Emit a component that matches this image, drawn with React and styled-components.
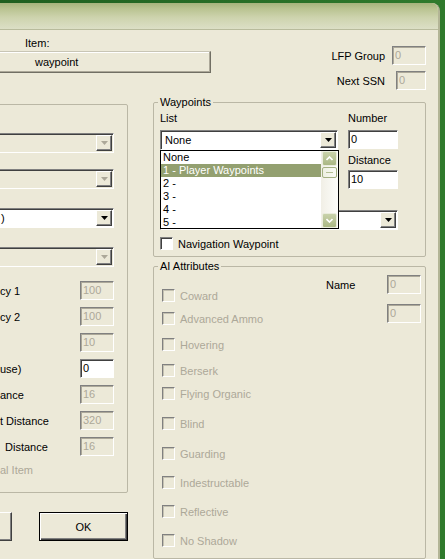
import React from "react";
import styled, { createGlobalStyle } from "styled-components";

const GlobalStyle = createGlobalStyle`
  html, body {
    margin: 0;
    padding: 0;
  }
  body {
    background: linear-gradient(90deg, #1f5f1f, #2f7a2c);
    font-family: "Liberation Sans", Arial, sans-serif;
    font-size: 11px;
    color: #000;
    overflow: hidden;
  }
`;

const Window = styled.div`
  margin: 3px 5px 0 0;
  height: 556px;
  background: #ece9d8;
  border-top-right-radius: 8px;
  border-right: 2px solid #b3b596;
  overflow: hidden;
  display: flex;
  flex-direction: column;
`;

const TitleBar = styled.div`
  height: 26px;
  flex: none;
  border-bottom: 1px solid #b8bb9c;
  background: linear-gradient(180deg, #a6b37c 0%, #b9c391 22%, #cdd3ad 55%, #dcdfc6 100%);
`;

const Body = styled.div`
  padding-right: 12px;
  display: flex;
  flex-direction: column;
`;

const Header = styled.div`
  display: flex;
  justify-content: space-between;
  height: 62px;
`;

const ItemBlock = styled.div`
  margin-left: -10px;
  width: 221px;
`;

const ItemLabel = styled.div`
  padding-left: 35px;
  margin-top: 7px;
  line-height: 13px;
`;

const ItemBox = styled.div`
  margin-top: 1px;
  height: 22px;
  box-sizing: border-box;
  padding-left: 44px;
  line-height: 20px;
  border: 1px solid;
  border-color: #c8c5b5 #716f64 #716f64 #c8c5b5;
  box-shadow: inset -1px -1px 0 #aca899, inset 1px 1px 0 #fff;
`;

const HeaderRight = styled.div`
  padding-top: 16px;
  display: flex;
  flex-direction: column;
  align-items: flex-end;
  gap: 6px;
`;

const HeaderRow = styled.div`
  display: flex;
  align-items: center;
  gap: ${(p) => p.$gap}px;
`;

const Input = styled.div`
  width: ${(p) => p.$w || 34}px;
  height: 19px;
  margin-top: ${(p) => p.$mt || 0}px;
  box-sizing: border-box;
  flex: none;
  padding-left: 2px;
  line-height: 17px;
  border: 1px solid;
  border-color: #808080 #fff #fff #808080;
  box-shadow: inset 1px 1px 0 ${(p) => (p.$disabled ? "#aca899" : "#404040")};
  background: ${(p) => (p.$disabled ? "#ece9d8" : "#fff")};
  color: ${(p) => (p.$disabled ? "#aca899" : "#000")};
`;

const Columns = styled.div`
  display: flex;
  gap: 25px;
  margin-top: 12px;
`;

const LeftCol = styled.div`
  margin-left: -10px;
  width: 138px;
  flex: none;
  display: flex;
  flex-direction: column;
`;

const RightCol = styled.div`
  width: 273px;
  flex: none;
  margin-top: -8px;
  display: flex;
  flex-direction: column;
  gap: 3px;
`;

const Group = styled.fieldset`
  margin: 0;
  min-width: 0;
  box-sizing: border-box;
  padding: ${(p) => p.$pad};
  border: 1px solid #bab7a5;
  border-radius: 2px;
  display: flex;
  flex-direction: column;
`;

const Legend = styled.legend`
  padding: 0 2px;
  margin-left: -2px;
  line-height: 13px;
`;

const ComboBox = styled.div`
  display: flex;
  height: 20px;
  box-sizing: border-box;
  flex: none;
  margin-top: ${(p) => p.$mt || 0}px;
  margin-left: ${(p) => p.$bleed || 0}px;
  padding: 1px;
  border: 1px solid;
  border-color: #808080 #fff #fff #808080;
  box-shadow: inset 1px 1px 0 #404040;
  background: ${(p) => (p.$disabled ? "#ece9d8" : "#fff")};
`;

const ComboValue = styled.div`
  flex: 1;
  min-width: 0;
  overflow: hidden;
  white-space: nowrap;
  line-height: 16px;
  padding-left: ${(p) => p.$pad ?? 3}px;
`;

const ArrowButton = styled.div`
  width: 16px;
  height: 16px;
  flex: none;
  box-sizing: border-box;
  display: flex;
  align-items: center;
  justify-content: center;
  background: #ece9d8;
  border: 1px solid;
  border-color: #fff #404040 #404040 #fff;
  box-shadow: inset -1px -1px 0 #808080;
`;

const Combo = ({ value, disabled, mt, bleed, pad }) => (
  <ComboBox $disabled={disabled} $mt={mt} $bleed={bleed}>
    <ComboValue $pad={pad}>{value}</ComboValue>
    <ArrowButton>
      <svg width="7" height="4" viewBox="0 0 7 4">
        <polygon points="0,0 7,0 3.5,4" fill={disabled ? "#aca899" : "#000"} />
      </svg>
    </ArrowButton>
  </ComboBox>
);

const FieldRow = styled.div`
  display: flex;
  align-items: center;
  justify-content: space-between;
  height: 19px;
  margin-top: ${(p) => p.$mt}px;
`;

const RowLabel = styled.span`
  padding-left: ${(p) => p.$indent || 0}px;
  white-space: nowrap;
  color: ${(p) => (p.$disabled ? "#aca899" : "#000")};
`;

const StaticText = styled.div`
  line-height: 13px;
  margin-top: ${(p) => p.$mt || 0}px;
  color: ${(p) => (p.$disabled ? "#aca899" : "#000")};
`;

const ButtonRow = styled.div`
  display: flex;
  justify-content: flex-end;
  gap: 27px;
  margin-top: 19px;
`;

const Button = styled.div`
  width: ${(p) => p.$w}px;
  height: 29px;
  flex: none;
  box-sizing: border-box;
  display: flex;
  align-items: center;
  justify-content: center;
  background: #ece9d8;
  border: 1px solid;
  border-color: ${(p) => (p.$default ? "#000" : "#fff #404040 #404040 #fff")};
  box-shadow: ${(p) =>
    p.$default
      ? "inset 1px 1px 0 #fff, inset -1px -1px 0 #404040, inset -2px -2px 0 #808080"
      : "inset -1px -1px 0 #808080"};
`;

const WaypointGrid = styled.div`
  display: grid;
  grid-template-columns: 178px 50px;
  column-gap: 10px;
`;

const Stack = styled.div`
  display: flex;
  flex-direction: column;
`;

const ListField = styled.div`
  position: relative;
  margin-top: 5px;
`;

const DropList = styled.div`
  position: absolute;
  top: 100%;
  left: 0;
  width: 179px;
  height: 79px;
  box-sizing: border-box;
  border: 1px solid #000;
  background: #fff;
  display: flex;
  z-index: 2;
`;

const DropItems = styled.div`
  flex: 1;
`;

const DropItem = styled.div`
  line-height: 13px;
  padding-left: 2px;
  white-space: nowrap;
  background: ${(p) => (p.$active ? "#93a070" : "transparent")};
  color: ${(p) => (p.$active ? "#fff" : "#000")};
`;

const ScrollBar = styled.div`
  width: 17px;
  flex: none;
  display: flex;
  flex-direction: column;
  background: linear-gradient(90deg, #f1efe6, #fdfdfa);
`;

const ScrollButton = styled.div`
  height: 15px;
  margin: 0 1px;
  box-sizing: border-box;
  border: 1px solid #e9ecdc;
  border-radius: 2px;
  background: linear-gradient(180deg, #c9d2ab, #aab784);
  display: flex;
  align-items: center;
  justify-content: center;
`;

const ScrollThumb = styled.div`
  height: 11px;
  margin: 1px 1px 0;
  box-sizing: border-box;
  border: 1px solid #a4b082;
  border-radius: 2px;
  background: linear-gradient(90deg, #eef0e2, #fafbf5);
  display: flex;
  align-items: center;
  justify-content: center;
`;

const Grip = styled.div`
  width: 7px;
  height: 1px;
  background: #b5bf95;
`;

const ScrollFill = styled.div`
  flex: 1;
`;

const CheckRow = styled.div`
  display: flex;
  align-items: center;
  gap: 5px;
  height: 13px;
  margin-top: ${(p) => p.$mt || 0}px;
  color: ${(p) => (p.$disabled ? "#aca899" : "#000")};
  white-space: nowrap;
`;

const CheckBox = styled.span`
  width: 13px;
  height: 13px;
  flex: none;
  box-sizing: border-box;
  border: 1px solid;
  border-color: #808080 #fff #fff #808080;
  box-shadow: inset 1px 1px 0 ${(p) => (p.$disabled ? "#c4c1b1" : "#404040")};
  background: ${(p) => (p.$disabled ? "#ece9d8" : "#fff")};
`;

const AIBody = styled.div`
  display: flex;
`;

const CheckList = styled.div`
  flex: 1;
  padding-left: 2px;
  display: flex;
  flex-direction: column;
`;

const NamePanel = styled.div`
  display: grid;
  grid-template-columns: 61px 34px;
  row-gap: 10px;
  align-items: center;
  align-self: flex-start;
  margin-top: 2px;
`;

const leftRows = [
  { label: "cy 1", value: "100", disabled: true },
  { label: "cy 2", value: "100", disabled: true },
  { label: "", value: "10", disabled: true },
  { label: "use)", value: "0", disabled: false },
  { label: "ance", value: "16", disabled: true },
  { label: "t Distance", value: "320", disabled: true },
  { label: "Distance", value: "16", disabled: true, indent: 5 },
];

const waypointLists = ["None", "1 - Player Waypoints", "2 -", "3 -", "4 -", "5 -"];

const aiAttributes = [
  { label: "Coward", mt: 16 },
  { label: "Advanced Ammo", mt: 10 },
  { label: "Hovering", mt: 13 },
  { label: "Berserk", mt: 13 },
  { label: "Flying Organic", mt: 10 },
  { label: "Blind", mt: 17 },
  { label: "Guarding", mt: 17 },
  { label: "Indestructable", mt: 16 },
  { label: "Reflective", mt: 16 },
  { label: "No Shadow", mt: 16 },
];

const Chevron = ({ up }) => (
  <svg width="7" height="5" viewBox="0 0 7 5">
    <polyline
      points={up ? "0.5,4 3.5,1 6.5,4" : "0.5,1 3.5,4 6.5,1"}
      fill="none"
      stroke="#fff"
      strokeWidth="1.6"
    />
  </svg>
);

const App = () => {
  return (
    <>
      <GlobalStyle />
      <Window>
        <TitleBar />
        <Body>
          <Header>
            <ItemBlock>
              <ItemLabel>Item:</ItemLabel>
              <ItemBox>waypoint</ItemBox>
            </ItemBlock>
            <HeaderRight>
              <HeaderRow $gap={7}>
                <span>LFP Group</span>
                <Input $disabled>0</Input>
              </HeaderRow>
              <HeaderRow $gap={11}>
                <span>Next SSN</span>
                <Input $disabled $w={30}>0</Input>
              </HeaderRow>
            </HeaderRight>
          </Header>

          <Columns>
            <LeftCol>
              <Group $pad="0 13px 15px 9px">
                <Combo disabled mt={28} bleed={-20} value="" />
                <Combo disabled mt={16} bleed={-20} value="" />
                <Combo mt={19} bleed={-20} pad={19} value=")" />
                <Combo disabled mt={19} bleed={-20} value="" />
                {leftRows.map((row, i) => (
                  <FieldRow key={i} $mt={i === 0 ? 14 : 7}>
                    <RowLabel $indent={row.indent}>{row.label}</RowLabel>
                    <Input $disabled={row.disabled}>{row.value}</Input>
                  </FieldRow>
                ))}
                <StaticText $mt={8} $disabled>al Item</StaticText>
              </Group>
              <ButtonRow>
                <Button $w={75} />
                <Button $w={89} $default>OK</Button>
              </ButtonRow>
            </LeftCol>

            <RightCol>
              <Group $pad="3px 27px 6px 6px">
                <Legend>Waypoints</Legend>
                <WaypointGrid>
                  <Stack>
                    <StaticText>List</StaticText>
                    <ListField>
                      <Combo value="None" />
                      <DropList>
                        <DropItems>
                          {waypointLists.map((item, i) => (
                            <DropItem key={item} $active={i === 1}>
                              {item}
                            </DropItem>
                          ))}
                        </DropItems>
                        <ScrollBar>
                          <ScrollButton>
                            <Chevron up />
                          </ScrollButton>
                          <ScrollThumb>
                            <Grip />
                          </ScrollThumb>
                          <ScrollFill />
                          <ScrollButton>
                            <Chevron />
                          </ScrollButton>
                        </ScrollBar>
                      </DropList>
                    </ListField>
                  </Stack>
                  <Stack>
                    <StaticText>Number</StaticText>
                    <Input $w={50} $mt={5}>0</Input>
                    <StaticText $mt={5}>Distance</StaticText>
                    <Input $w={50} $mt={3}>10</Input>
                  </Stack>
                </WaypointGrid>
                <Combo mt={21} value="" />
                <CheckRow $mt={7}>
                  <CheckBox />
                  Navigation Waypoint
                </CheckRow>
              </Group>

              <Group $pad="0 4px 11px 6px">
                <Legend>AI Attributes</Legend>
                <AIBody>
                  <CheckList>
                    {aiAttributes.map((attr) => (
                      <CheckRow key={attr.label} $mt={attr.mt} $disabled>
                        <CheckBox $disabled />
                        {attr.label}
                      </CheckRow>
                    ))}
                  </CheckList>
                  <NamePanel>
                    <span>Name</span>
                    <Input $disabled>0</Input>
                    <span />
                    <Input $disabled>0</Input>
                  </NamePanel>
                </AIBody>
              </Group>
            </RightCol>
          </Columns>
        </Body>
      </Window>
    </>
  );
};

export default App;
